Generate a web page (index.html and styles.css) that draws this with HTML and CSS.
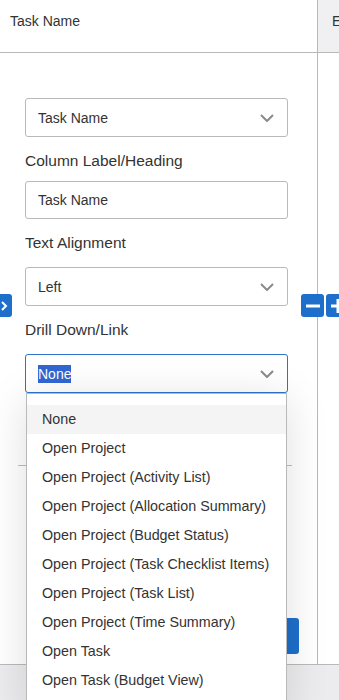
FILE: index.html
```html
<!DOCTYPE html>
<html lang="en">
<head>
    <meta charset="UTF-8">
    <meta name="viewport" content="width=device-width, initial-scale=1.0">
    <title>Column Settings</title>
    <link rel="stylesheet" href="styles.css">
</head>
<body>
    <div class="grid">
        <div class="col main-col">
            <div class="col-head">Task Name</div>
            <div class="panel">
                <div class="select">
                    <span class="select-value">Task Name</span>
                    <svg class="chevron" width="14" height="8" viewBox="0 0 14 8"><path d="M1 1l6 6 6-6" fill="none" stroke="#8a8a8a" stroke-width="2"/></svg>
                </div>

                <label class="field-label tight">Column Label/Heading</label>
                <input class="text-input" type="text" value="Task Name">

                <label class="field-label">Text Alignment</label>
                <div class="select">
                    <span class="select-value">Left</span>
                    <svg class="chevron" width="14" height="8" viewBox="0 0 14 8"><path d="M1 1l6 6 6-6" fill="none" stroke="#8a8a8a" stroke-width="2"/></svg>
                </div>

                <label class="field-label">Drill Down/Link</label>
                <div class="select-wrap">
                    <div class="select focused">
                        <span class="select-value"><span class="selected-text">None</span></span>
                        <svg class="chevron" width="14" height="8" viewBox="0 0 14 8"><path d="M1 1l6 6 6-6" fill="none" stroke="#8a8a8a" stroke-width="2"/></svg>
                    </div>
                    <ul class="options">
                        <li class="active">None</li>
                        <li>Open Project</li>
                        <li>Open Project (Activity List)</li>
                        <li>Open Project (Allocation Summary)</li>
                        <li>Open Project (Budget Status)</li>
                        <li>Open Project (Task Checklist Items)</li>
                        <li>Open Project (Task List)</li>
                        <li>Open Project (Time Summary)</li>
                        <li>Open Task</li>
                        <li>Open Task (Budget View)</li>
                    </ul>
                </div>

                <hr class="divider">

                <div class="actions">
                    <button class="btn">Apply</button>
                </div>
            </div>
        </div>
        <div class="col side-col">
            <div class="col-head side-head">E</div>
        </div>

        <button class="edge-btn left-btn">
            <svg width="8" height="10" viewBox="0 0 8 10"><path d="M2 1l4 4-4 4" fill="none" stroke="#fff" stroke-width="2"/></svg>
        </button>
        <div class="size-btns">
            <button class="edge-btn">
                <svg width="14" height="4" viewBox="0 0 14 4"><path d="M0 2h14" stroke="#fff" stroke-width="3"/></svg>
            </button>
            <button class="edge-btn">
                <svg width="14" height="14" viewBox="0 0 14 14"><path d="M0 7h14M7 0v14" stroke="#fff" stroke-width="3"/></svg>
            </button>
        </div>
    </div>
    <div class="footer"></div>
</body>
</html>
```

FILE: styles.css
```css
body {
    margin: 0;
    font-family: "Liberation Sans", Arial, sans-serif;
    color: #333;
    background: #fff;
    overflow: hidden;
}
.grid {
    position: relative;
    display: grid;
    grid-template-columns: 318px 1fr;
    height: 664px;
}
.main-col {
    border-right: 1px solid #b9b9b9;
}
.col-head {
    height: 53px;
    box-sizing: border-box;
    padding: 13px 10px 0;
    font-size: 14px;
    line-height: 16px;
    border-bottom: 1px solid #b9b9b9;
}
.side-head {
    background: #f0f0f2;
    padding-left: 14px;
}
.panel {
    padding: 45px 30px 0 25px;
}
.select, .text-input {
    display: flex;
    align-items: center;
    box-sizing: border-box;
    width: 263px;
    height: 39px;
    padding: 0 13px 0 12px;
    border: 1px solid #b9b9b9;
    border-radius: 3px;
    background: #fff;
    font: 14px "Liberation Sans", Arial, sans-serif;
    color: #333;
}
.text-input {
    height: 38px;
    outline: none;
}
.select-value {
    flex: 1;
}
.chevron {
    display: block;
}
.select.focused {
    border-color: #2e73c9;
}
.selected-text {
    background: #3166d3;
    color: #fff;
    padding: 1px 0;
}
.field-label {
    display: block;
    margin: 14px 0 14px;
    font-size: 15.5px;
    line-height: 20px;
}
.field-label.tight {
    margin-bottom: 10px;
}
.select-wrap {
    position: relative;
}
.options {
    position: absolute;
    top: 39px;
    left: 1px;
    width: 261px;
    box-sizing: border-box;
    margin: 0;
    padding: 11px 0 20px;
    list-style: none;
    background: #fff;
    border: 1px solid #b9b9b9;
    box-shadow: 0 6px 40px rgba(0, 0, 0, 0.13);
    z-index: 2;
}
.options li {
    height: 29px;
    line-height: 29px;
    padding-left: 15px;
    font-size: 14.3px;
    color: #333;
    white-space: nowrap;
}
.options li.active {
    background: #f4f4f4;
}
.divider {
    margin: 72px -5px 0 -7px;
    border: none;
    border-top: 1px solid #bdbdbd;
}
.actions {
    display: flex;
    justify-content: flex-end;
    margin: 152px -12px 0 0;
}
.btn {
    width: 70px;
    height: 36px;
    border: none;
    border-radius: 3px;
    background: #1e6fcb;
    color: #fff;
    font: 14px "Liberation Sans", Arial, sans-serif;
}
.edge-btn {
    display: flex;
    align-items: center;
    justify-content: center;
    width: 23px;
    height: 23px;
    padding: 0;
    border: none;
    border-radius: 3px;
    background: #1e6fcb;
}
.left-btn {
    position: absolute;
    left: -11px;
    top: 294px;
    justify-content: flex-end;
    padding-right: 4px;
}
.size-btns {
    position: absolute;
    left: 301px;
    top: 294px;
    display: flex;
    gap: 2px;
}
.footer {
    height: 36px;
    border-top: 1px solid #b9b9b9;
    background: #ececee;
}
```
